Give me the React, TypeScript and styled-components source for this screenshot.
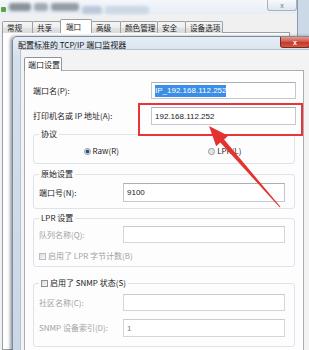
import React from 'react';
import styled, { createGlobalStyle } from 'styled-components';

const GlobalStyle = createGlobalStyle`
  html, body {
    margin: 0;
    padding: 0;
    background: #d3dde9;
  }
  body {
    font-family: "Noto Sans CJK SC", "Liberation Sans", sans-serif;
    font-size: 8px;
    color: #1b1b1b;
  }
`;

const Screen = styled.div`
  position: relative;
  width: 309px;
  height: 350px;
  overflow: hidden;
  background: linear-gradient(to right, #dfe7f0, #cbd8e6);
`;

// background printer properties window
const OuterWindow = styled.div`
  width: 297px;
  height: 350px;
  display: flex;
  flex-direction: column;
  border-right: 1px solid #8d9aab;
  background: #eef2f6;
`;

const OuterTitle = styled.div`
  height: 14px;
  display: flex;
  align-items: center;
  gap: 3px;
  padding-left: 1px;
  background: linear-gradient(#f4f7fb, #e6edf5);
`;

const AppIcon = styled.div`
  width: 5px;
  height: 5px;
  margin-top: 4px;
  border-radius: 1px;
  background: #5aa34a;
`;

const Blur = styled.div<{ $w: number; $tone: string; $dy?: number }>`
  width: ${p => p.$w}px;
  height: 8px;
  margin-top: ${p => p.$dy ?? 0}px;
  background: ${p => p.$tone};
  border-radius: 3px;
  filter: blur(1.6px);
`;

const OuterClose = styled.div`
  margin-left: auto;
  align-self: flex-start;
  width: 28px;
  height: 10px;
  display: flex;
  align-items: center;
  justify-content: center;
  border: 1px solid #a7b2c0;
  border-top: none;
  border-radius: 0 0 3px 3px;
  background: linear-gradient(#f7f9fb, #dfe6ee);
  color: #6b7480;
  font-family: "Liberation Sans", sans-serif;
  font-size: 7px;
`;

const OuterBody = styled.div`
  flex: 1;
  display: flex;
  flex-direction: column;
  padding: 5px 7px 0 2px;
  background: #f0f0f0;
`;

const TabStrip = styled.div`
  height: 14px;
  display: flex;
  align-items: flex-end;
`;

const OuterTab = styled.div<{ $w: number; $active?: boolean }>`
  width: ${p => p.$w}px;
  height: ${p => (p.$active ? 14 : 12)}px;
  margin-right: -1px;
  box-sizing: border-box;
  display: flex;
  align-items: center;
  padding-left: ${p => (p.$active ? 5 : 4)}px;
  border: 1px solid #9aa0a8;
  border-bottom: none;
  border-radius: 2px 2px 0 0;
  background: ${p => (p.$active ? '#ffffff' : 'linear-gradient(#f7f7f7, #ececec 50%, #e2e2e2 51%, #dadada)')};
  position: relative;
  z-index: ${p => (p.$active ? 1 : 0)};
  font-size: 7.6px;
  line-height: 10px;
  white-space: nowrap;
`;

const OuterPanel = styled.div`
  flex: 1;
  margin-top: -1px;
  border: 1px solid #9aa0a8;
  background: #ffffff;
`;

// front dialog
const Dialog = styled.div`
  position: absolute;
  left: 12px;
  top: 36px;
  width: 300px;
  height: 330px;
  display: flex;
  flex-direction: column;
  border: 1px solid #7d8a99;
  border-radius: 5px 5px 0 0;
  background: linear-gradient(#e6edf5, #d4e0ed 20px, #c9d7e6);
  box-shadow: -2px 0 3px rgba(40, 50, 60, 0.45);
`;

const DialogTitle = styled.div`
  height: 14px;
  display: flex;
  align-items: flex-start;
  padding: 0 3px 0 5px;
`;

const TitleText = styled.span`
  margin-top: 3px;
  font-size: 8px;
  line-height: 9px;
  color: #111;
  white-space: nowrap;
`;

const RedClose = styled.div`
  margin-left: auto;
  width: 28px;
  height: 10px;
  display: flex;
  align-items: center;
  justify-content: center;
  border: 1px solid #7a2a22;
  border-top: none;
  border-radius: 0 0 3px 3px;
  background: linear-gradient(#e79a8e, #d4584a 45%, #c23a2b 55%, #d35a3e);
  color: #fff;
  font-family: "Liberation Sans", sans-serif;
  font-weight: bold;
  font-size: 7px;
`;

const Client = styled.div`
  flex: 1;
  margin: 0 2px 0 7px;
  padding: 7px 0 0 3px;
  background: #f3f3f3;
  border-top: 1px solid #b6c2cf;
  border-left: 1px solid #b6c2cf;
`;

const InnerTab = styled.div`
  width: 38px;
  height: 14px;
  box-sizing: border-box;
  display: flex;
  align-items: center;
  padding-left: 3px;
  border: 1px solid #8f959d;
  border-bottom: none;
  border-radius: 2px 2px 0 0;
  background: #ffffff;
  position: relative;
  z-index: 1;
  line-height: 10px;
  white-space: nowrap;
`;

const Panel = styled.div`
  width: 280px;
  height: 300px;
  box-sizing: border-box;
  margin-top: -1px;
  padding: 11px 7px 0 8px;
  border: 1px solid #a9afb6;
  background: #fdfdfd;
  display: flex;
  flex-direction: column;
`;

const TopRow = styled.div<{ $gap?: number }>`
  display: grid;
  grid-template-columns: 118px 1fr;
  align-items: center;
  margin-top: ${p => p.$gap ?? 0}px;
`;

const Label = styled.span<{ $off?: boolean }>`
  color: ${p => (p.$off ? '#a2a2a2' : '#1b1b1b')};
  line-height: 10px;
  white-space: nowrap;
`;

const Field = styled.div<{ $h: number; $off?: boolean }>`
  height: ${p => p.$h}px;
  box-sizing: border-box;
  display: flex;
  align-items: center;
  padding-left: 3px;
  border: 1px solid ${p => (p.$off ? '#d2d5d9' : '#c3c8ce')};
  border-top-color: ${p => (p.$off ? '#c9ccd0' : '#abb0b7')};
  background: #ffffff;
  color: ${p => (p.$off ? '#7c7c7c' : '#1b1b1b')};
  font-family: "Liberation Sans", sans-serif;
  font-size: 8px;
  white-space: nowrap;
`;

const Selected = styled.span`
  background: #3a8ee6;
  color: #ffffff;
  padding: 1px 0;
  line-height: 10px;
`;

const Group = styled.fieldset<{ $gap: number; $pad: string }>`
  margin: ${p => p.$gap}px 1px 0 0;
  padding: ${p => p.$pad};
  min-width: 0;
  border: 1px solid #dde3e8;
  border-radius: 3px;
  display: flex;
  flex-direction: column;
`;

const Legend = styled.legend`
  margin-left: 0;
  padding: 0 2px;
  height: 10px;
  line-height: 10px;
  display: flex;
  align-items: center;
  gap: 2px;
  white-space: nowrap;
`;

const RadioRow = styled.div`
  height: 12px;
  display: flex;
  align-items: center;
  justify-content: space-around;
`;

const Option = styled.label`
  display: flex;
  align-items: center;
  gap: 2px;
  line-height: 10px;
`;

const Radio = styled.span<{ $on?: boolean }>`
  width: 7px;
  height: 7px;
  box-sizing: border-box;
  border-radius: 50%;
  border: 1px solid #8d9196;
  background: ${p =>
    p.$on
      ? 'radial-gradient(circle, #1d3f6e 0, #2f5f9a 1.6px, #e9ecef 2.2px, #f7f7f7)'
      : 'radial-gradient(circle, #dcdcdc, #f8f8f8)'};
`;

const Check = styled.span<{ $off?: boolean }>`
  width: 7px;
  height: 7px;
  box-sizing: border-box;
  border: 1px solid ${p => (p.$off ? '#b9bcc0' : '#8e9297')};
  background: linear-gradient(135deg, #dadde0, #f9f9f9);
`;

const GroupRow = styled.div<{ $gap?: number }>`
  display: grid;
  grid-template-columns: 84px 1fr;
  align-items: center;
  margin-top: ${p => p.$gap ?? 0}px;
`;

const CheckRow = styled.div<{ $gap: number }>`
  height: 12px;
  margin-top: ${p => p.$gap}px;
  display: flex;
  align-items: center;
  gap: 2px;
`;

const Mark = styled.div`
  position: absolute;
  left: 138px;
  top: 103px;
  width: 165px;
  height: 33px;
  box-sizing: border-box;
  border: 2px solid #e8353a;
`;

const ArrowLayer = styled.svg`
  position: absolute;
  left: 0;
  top: 0;
  pointer-events: none;
`;

const outerTabs = [
  { name: '常规', w: 31 },
  { name: '共享', w: 29 },
  { name: '端口', w: 32, active: true },
  { name: '高级', w: 30 },
  { name: '颜色管理', w: 38 },
  { name: '安全', w: 29 },
  { name: '设备选项', w: 38 },
];

const App: React.FC = () => {
  return (
    <Screen>
      <GlobalStyle />
      <OuterWindow>
        <OuterTitle>
          <AppIcon />
          <Blur $w={22} $tone="#8a919a" />
          <Blur $w={14} $tone="#a3a9b1" />
          <Blur $w={28} $tone="#959ca5" />
          <Blur $w={20} $tone="#b9c9da" $dy={6} />
          <Blur $w={44} $tone="#cbd8e7" $dy={6} />
          <OuterClose>x</OuterClose>
        </OuterTitle>
        <OuterBody>
          <TabStrip>
            {outerTabs.map(t => (
              <OuterTab key={t.name} $w={t.w} $active={t.active}>
                {t.name}
              </OuterTab>
            ))}
          </TabStrip>
          <OuterPanel />
        </OuterBody>
      </OuterWindow>

      <Dialog>
        <DialogTitle>
          <TitleText>配置标准的 TCP/IP 端口监视器</TitleText>
          <RedClose>x</RedClose>
        </DialogTitle>
        <Client>
          <InnerTab>端口设置</InnerTab>
          <Panel>
            <TopRow>
              <Label>端口名(P):</Label>
              <Field $h={17}>
                <Selected>IP_192.168.112.252</Selected>
              </Field>
            </TopRow>
            <TopRow $gap={8}>
              <Label>打印机名或 IP 地址(A):</Label>
              <Field $h={18}>192.168.112.252</Field>
            </TopRow>

            <Group $gap={4} $pad="6px 8px 6px 5px">
              <Legend>协议</Legend>
              <RadioRow>
                <Option>
                  <Radio $on />
                  Raw(R)
                </Option>
                <Option>
                  <Radio />
                  LPR(L)
                </Option>
              </RadioRow>
            </Group>

            <Group $gap={5} $pad="4px 9px 6px 5px">
              <Legend>原始设置</Legend>
              <GroupRow>
                <Label>端口号(N):</Label>
                <Field $h={19}>9100</Field>
              </GroupRow>
            </Group>

            <Group $gap={4} $pad="3px 9px 4px 5px">
              <Legend>LPR 设置</Legend>
              <GroupRow>
                <Label $off>队列名称(Q):</Label>
                <Field $h={17} $off />
              </GroupRow>
              <CheckRow $gap={7}>
                <Check $off />
                <Label $off>启用了 LPR 字节计数(B)</Label>
              </CheckRow>
            </Group>

            <Group $gap={11} $pad="6px 9px 9px 5px">
              <Legend>
                <Check />
                启用了 SNMP 状态(S)
              </Legend>
              <GroupRow>
                <Label $off>社区名称(C):</Label>
                <Field $h={17} $off />
              </GroupRow>
              <GroupRow $gap={8}>
                <Label $off>SNMP 设备索引(D):</Label>
                <Field $h={18} $off>1</Field>
              </GroupRow>
            </Group>
          </Panel>
        </Client>
      </Dialog>

      <Mark />
      <ArrowLayer width="309" height="350" viewBox="0 0 309 350">
        <polygon
          points="209,126 228.2,135.7 224.1,139.4 280.4,206.7 279.6,207.3 220.3,142.6 216.2,146.3"
          fill="#e4322e"
        />
      </ArrowLayer>
    </Screen>
  );
};

export default App;
